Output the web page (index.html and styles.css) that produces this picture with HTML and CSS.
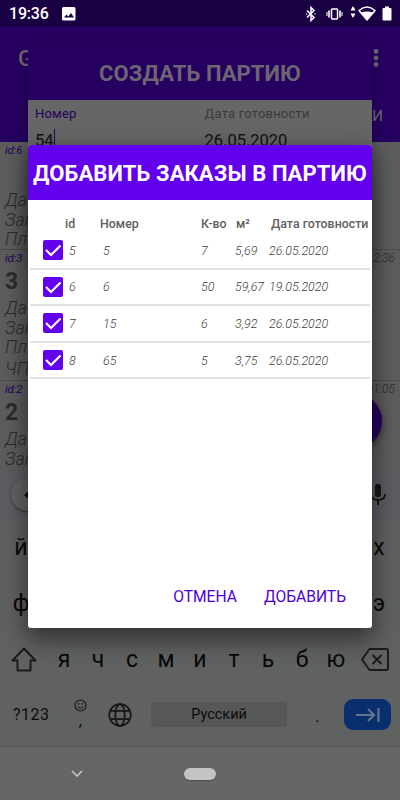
FILE: index.html
```html
<!DOCTYPE html>
<html lang="ru">
<head>
  <meta charset="UTF-8">
  <meta name="viewport" content="width=device-width, initial-scale=1.0">
  <title>Добавить заказы в партию</title>
  <link rel="stylesheet" href="styles.css">
</head>
<body>
  <div class="screen">
    <header class="status-bar">
      <span class="clock">19:36</span>
      <svg class="photo" width="14" height="14" viewBox="0 0 14 14"><rect width="13.5" height="13.5" rx="1.5" fill="#fff"/><path d="M2 10.5l2.5-3 1.8 2L9 6l3 4.500z" fill="#190042"/></svg>
      <div class="status-icons">
        <svg width="10" height="16" viewBox="0 0 10 16" fill="none" stroke="#fff" stroke-width="1.5"><path d="M1 4.500l7 7L5 14.500V1.500l3 3-7 7"/><path d="M.2 8h1M8.500 8h1"/></svg>
        <svg class="vibrate" width="17" height="12" viewBox="0 0 17 12" fill="none" stroke="#fff"><rect x="5.500" y="1" width="6" height="10" rx=".7" stroke-width="1.500"/><path d="M3 2.500v7M14 2.500v7" stroke-width="1.600"/><path d="M1 4v4M16 4v4" stroke-width="1.300" opacity=".8"/></svg>
        <svg class="arrows" width="6" height="12" viewBox="0 0 6 12" fill="#fff"><path d="M3 0l2.500 4.500h-5zM3 12l2.500-4.500h-5z"/></svg>
        <svg width="18" height="15" viewBox="0 0 18 15"><path d="M1 4.500Q9-2.500 17 4.500L9 14z" fill="none" stroke="#fff" stroke-width="1.500" stroke-linejoin="round"/><path d="M3 6.500Q9 4.500 15 6.500L9 14z" fill="#fff"/></svg>
        <svg class="battery" width="10" height="15" viewBox="0 0 10 15" fill="#fff"><path d="M3 .5h4V2h1.500q1 0 1 1v10.500q0 1-1 1h-7q-1 0-1-1V3q0-1 1-1H3z"/></svg>
      </div>
    </header>

    <div class="app-bar">
      <div class="app-title">
        <span>G</span>
        <svg width="6" height="20" viewBox="0 0 6 20" fill="#6b6670"><circle cx="3" cy="3.500" r="2.400"/><circle cx="3" cy="10" r="2.400"/><circle cx="3" cy="16.500" r="2.400"/></svg>
      </div>
      <div class="tab">КИ</div>
    </div>

    <main class="orders">
      <div class="order first">
        <div class="order-top"><span class="order-id">id:6</span></div>
        <strong></strong>
        <p>Да</p>
        <p>Зак</p>
        <p>Пл</p>
      </div>
      <div class="order second">
        <div class="order-top"><span class="order-id">id:3</span><em>2:36</em></div>
        <strong>3</strong>
        <p>Да</p>
        <p>Зак</p>
        <p>Пл</p>
        <p class="cnc">ЧП</p>
      </div>
      <div class="order">
        <div class="order-top"><span class="order-id">id:2</span><em>01:05</em></div>
        <strong>2</strong>
        <p>Да</p>
        <p>Зак</p>
      </div>
      <div class="fab"></div>
    </main>

    <div class="keyboard">
      <div class="suggestions">
        <div class="round"><svg width="8" height="12" viewBox="0 0 8 12" fill="#111"><path d="M0 6l5-4.500v9zM4 5h4v2H4z"/></svg></div>
        <svg width="16" height="22" viewBox="0 0 16 22"><rect x="5" y="0" width="6" height="13" rx="2.500" fill="#161719"/><path d="M1 10q0 6 7 6t7-6M8 16v5" fill="none" stroke="#161719" stroke-width="2"/></svg>
      </div>
      <div class="keys wide"><span>й</span><span>х</span></div>
      <div class="keys wide"><span>ф</span><span>э</span></div>
      <div class="keys letters">
        <svg class="shift" width="26" height="25" viewBox="0 0 26 25" fill="none" stroke="#191a1a" stroke-width="1.900" stroke-linejoin="round"><path d="M13 1.500L24.500 13.500H19.500V23.500H6.500V13.500H1.500z"/></svg>
        <span>я</span><span>ч</span><span>с</span><span>м</span><span>и</span><span>т</span><span>ь</span><span>б</span><span>ю</span>
        <svg class="erase" width="28" height="23" viewBox="0 0 28 23" fill="none" stroke="#191a1a" stroke-width="1.900" stroke-linejoin="round"><path d="M8.500 1H25q2 0 2 2v17q0 2-2 2H8.500L1 11.500zM11.500 7l9 9M20.500 7l-9 9"/></svg>
      </div>
      <div class="bottom-keys">
        <span class="digits">?123</span>
        <div class="comma">
          <svg width="13" height="13" viewBox="0 0 13 13" fill="none" stroke="#161717"><circle cx="6.500" cy="6.500" r="5.500" stroke-width="1.200"/><path d="M3.500 7.500q3 3.500 6 0"/><circle cx="4.500" cy="4.800" r=".5"/><circle cx="8.500" cy="4.800" r=".5"/></svg>
          <span>,</span>
        </div>
        <svg class="globe" width="24" height="24" viewBox="0 0 24 24" fill="none" stroke="#161717" stroke-width="1.700"><circle cx="12" cy="12" r="10.800"/><ellipse cx="12" cy="12" rx="4.700" ry="10.800"/><path d="M2.500 7.800h19M2.500 16.200h19"/></svg>
        <div class="space">Русский</div>
        <span class="dot">.</span>
        <div class="enter"><svg width="26" height="16" viewBox="0 0 26 16" fill="none" stroke="#66748c" stroke-width="2.200"><path d="M1 8h18M13 2l6 6-6 6M23.500 1v14"/></svg></div>
      </div>
    </div>

    <nav class="nav-bar">
      <svg width="12" height="8" viewBox="0 0 12 8" fill="none" stroke="#c4c4c4" stroke-width="1.700"><path d="M1 1l5 5 5-5"/></svg>
      <div class="pill"></div>
    </nav>
  </div>

  <div class="dialog create">
    <h2>СОЗДАТЬ ПАРТИЮ</h2>
    <div class="fields">
      <div class="field active"><label>Номер</label><p>54<i class="caret"></i></p></div>
      <div class="field"><label>Дата готовности</label><p>26.05.2020</p></div>
    </div>
  </div>

  <div class="dialog add">
    <h2>ДОБАВИТЬ ЗАКАЗЫ В ПАРТИЮ</h2>
    <div class="table">
      <div class="row head"><span></span><span>id</span><span>Номер</span><span>К-во</span><span>м²</span><span>Дата готовности</span></div>
      <div class="row"><svg class="check" viewBox="0 0 20 20"><path d="M3 10l5 5 9.500-9.500"/></svg><span>5</span><span>5</span><span>7</span><span>5,69</span><span>26.05.2020</span></div>
      <div class="row"><svg class="check" viewBox="0 0 20 20"><path d="M3 10l5 5 9.500-9.500"/></svg><span>6</span><span>6</span><span>50</span><span>59,67</span><span>19.05.2020</span></div>
      <div class="row"><svg class="check" viewBox="0 0 20 20"><path d="M3 10l5 5 9.500-9.500"/></svg><span>7</span><span>15</span><span>6</span><span>3,92</span><span>26.05.2020</span></div>
      <div class="row"><svg class="check" viewBox="0 0 20 20"><path d="M3 10l5 5 9.500-9.500"/></svg><span>8</span><span>65</span><span>5</span><span>3,75</span><span>26.05.2020</span></div>
    </div>
    <div class="actions">
      <button>ОТМЕНА</button>
      <button>ДОБАВИТЬ</button>
    </div>
  </div>
</body>
</html>
```
FILE: styles.css
```css
* {
  margin: 0;
  padding: 0;
  box-sizing: border-box;
}

body {
  width: 400px;
  height: 800px;
  overflow: hidden;
  position: relative;
  font-family: Roboto, sans-serif;
}

svg {
  display: block;
  flex-shrink: 0;
}

.screen {
  height: 800px;
  display: flex;
  flex-direction: column;
}

.status-bar {
  height: 27px;
  background: #190042;
  color: #fff;
  display: flex;
  align-items: center;
  padding: 0 8px 0 9px;
}

.clock {
  font-size: 16px;
  font-weight: 500;
  letter-spacing: -0.2px;
  width: 53px;
}

.status-icons {
  margin-left: auto;
  display: flex;
  align-items: center;
}

.vibrate {
  margin-left: 10px;
}

.arrows {
  margin: 0 2px 3px 7px;
}

.battery {
  margin-left: 6px;
}

.app-bar {
  height: 115px;
  background: #260060;
  color: #6b6670;
}

.app-title {
  display: flex;
  justify-content: space-between;
  align-items: center;
  height: 62px;
  padding: 0 21px 0 18px;
  font-size: 22px;
  font-weight: 500;
}

.tab {
  text-align: right;
  padding-right: 17px;
  font-size: 15px;
  line-height: 54px;
}

.orders {
  height: 328px;
  overflow: hidden;
  position: relative;
  background: #5d5d5d;
  color: #2b2b2b;
}

.order {
  height: 131px;
  padding: 0 5px;
  border-bottom: 1px solid #4c4c4c;
}

.first {
  height: 108px;
}

.order-top {
  display: flex;
  justify-content: space-between;
  font-size: 11.5px;
  font-style: italic;
  line-height: 16px;
}

.order-id {
  color: #260060;
  letter-spacing: -0.2px;
}

.order-top em {
  font-size: 12px;
  font-weight: 300;
}

.order strong {
  display: block;
  height: 32px;
  font-size: 23px;
  line-height: 32px;
}

.order p {
  font-size: 18px;
  font-weight: 300;
  font-style: italic;
  line-height: 19.5px;
}

.order .cnc {
  margin-top: 2px;
}

.fab {
  position: absolute;
  right: 18px;
  top: 251px;
  width: 56px;
  height: 56px;
  border-radius: 50%;
  background: #260060;
  box-shadow: 0 3px 7px #333;
}

.keyboard {
  height: 277px;
  background: #5f6261;
  border-bottom: 1px solid #515252;
}

.suggestions {
  height: 49px;
  background: #5b5d61;
  display: flex;
  align-items: center;
  justify-content: space-between;
  padding: 0 14px 0 11px;
}

.round {
  width: 33px;
  height: 33px;
  border-radius: 50%;
  background: #646464;
  box-shadow: 0 1px 2px #333;
  display: flex;
  align-items: center;
  padding-left: 13px;
}

.keys {
  display: flex;
  align-items: center;
  height: 56px;
  font-size: 23px;
  color: #080808;
}

.keys span {
  flex: 1;
  text-align: center;
}

.wide {
  justify-content: space-between;
  padding: 0 3px;
}

.wide span {
  flex: 0 0 36px;
}

.letters {
  padding: 0 11px;
}

.shift {
  margin-right: 10px;
}

.erase {
  margin-left: 8px;
}

.bottom-keys {
  display: flex;
  align-items: center;
  height: 55px;
  padding: 0 9px 0 13px;
  color: #0c0c0c;
  font-size: 16px;
}

.digits {
  width: 61px;
  letter-spacing: 0.5px;
}

.comma {
  width: 13px;
  height: 31px;
  text-align: center;
  line-height: 18px;
}

.globe {
  margin-left: 21px;
}

.space {
  width: 137px;
  height: 25px;
  margin-left: 19px;
  border-radius: 3px;
  background: #565757;
  font-size: 14.5px;
  line-height: 26px;
  text-align: center;
}

.dot {
  width: 57px;
  padding: 4px 0 0 28px;
}

.enter {
  width: 47px;
  height: 31px;
  border-radius: 9px;
  background: #0a2f6e;
  display: flex;
  align-items: center;
  justify-content: center;
}

.nav-bar {
  flex: 1;
  background: #666;
  display: flex;
  align-items: center;
  padding-left: 71px;
}

.pill {
  width: 32px;
  height: 12px;
  margin-left: 101px;
  border-radius: 6px;
  background: #c4c4c4;
  box-shadow: 0 1px 1px #4f4f4f;
}

/* Диалоги поверх экрана */
.dialog {
  position: absolute;
  left: 28px;
  width: 344px;
  border-radius: 3px;
  overflow: hidden;
}

.dialog h2 {
  text-align: center;
  font-size: 22px;
  font-weight: 700;
  letter-spacing: 0.1px;
  white-space: nowrap;
}

.create {
  top: 44px;
  height: 220px;
  background: #666;
  box-shadow: 0 5px 14px rgba(0, 0, 0, 0.25);
}

.create h2 {
  height: 56px;
  line-height: 59px;
  background: #260060;
  color: #6b6670;
}

.fields {
  display: flex;
  padding: 5px 7px;
}

.field {
  flex: 1;
  padding-left: 9px;
  color: #3b3b3b;
}

.field label {
  display: block;
  font-size: 13px;
  line-height: 17px;
  letter-spacing: 0.2px;
}

.field p {
  display: flex;
  font-size: 16.5px;
  line-height: 20px;
  color: #101010;
  padding-top: 9px;
}

.active {
  padding-left: 0;
}

.active label {
  color: #260060;
}

.caret {
  width: 1.5px;
  height: 20px;
  margin-top: -2px;
  background: #260060;
}

.add {
  top: 145px;
  height: 483px;
  background: #fff;
  box-shadow: 0 9px 24px 2px rgba(0, 0, 0, 0.5);
  display: flex;
  flex-direction: column;
}

.add h2 {
  height: 55px;
  line-height: 57px;
  background: #6200ee;
  color: #fff;
}

.table {
  padding: 13px 2px 0;
}

.row {
  display: grid;
  grid-template-columns: 39px 34px 98px 34px 34px 1fr;
  align-items: center;
  height: 36.6px;
  border-bottom: 2px solid #e2e2e2;
  font-size: 12.4px;
  font-weight: 300;
  font-style: italic;
  color: #3c3c3c;
  white-space: nowrap;
}

.head {
  grid-template-columns: 35px 35px 101px 35px 35px 1fr;
  height: 20px;
  border: 0;
  font-size: 12.4px;
  font-weight: 500;
  font-style: normal;
  color: #606060;
}

.check {
  width: 20px;
  height: 20px;
  margin-left: 13px;
  border-radius: 2px;
  background: #6200ee;
  fill: none;
  stroke: #fff;
  stroke-width: 2.2;
}

.actions {
  margin-top: auto;
  display: flex;
  justify-content: flex-end;
  gap: 27px;
  padding: 0 26px 20px;
}

.actions button {
  border: 0;
  background: none;
  font-family: inherit;
  font-size: 15.6px;
  line-height: 21px;
  color: #4b00e0;
}
```
